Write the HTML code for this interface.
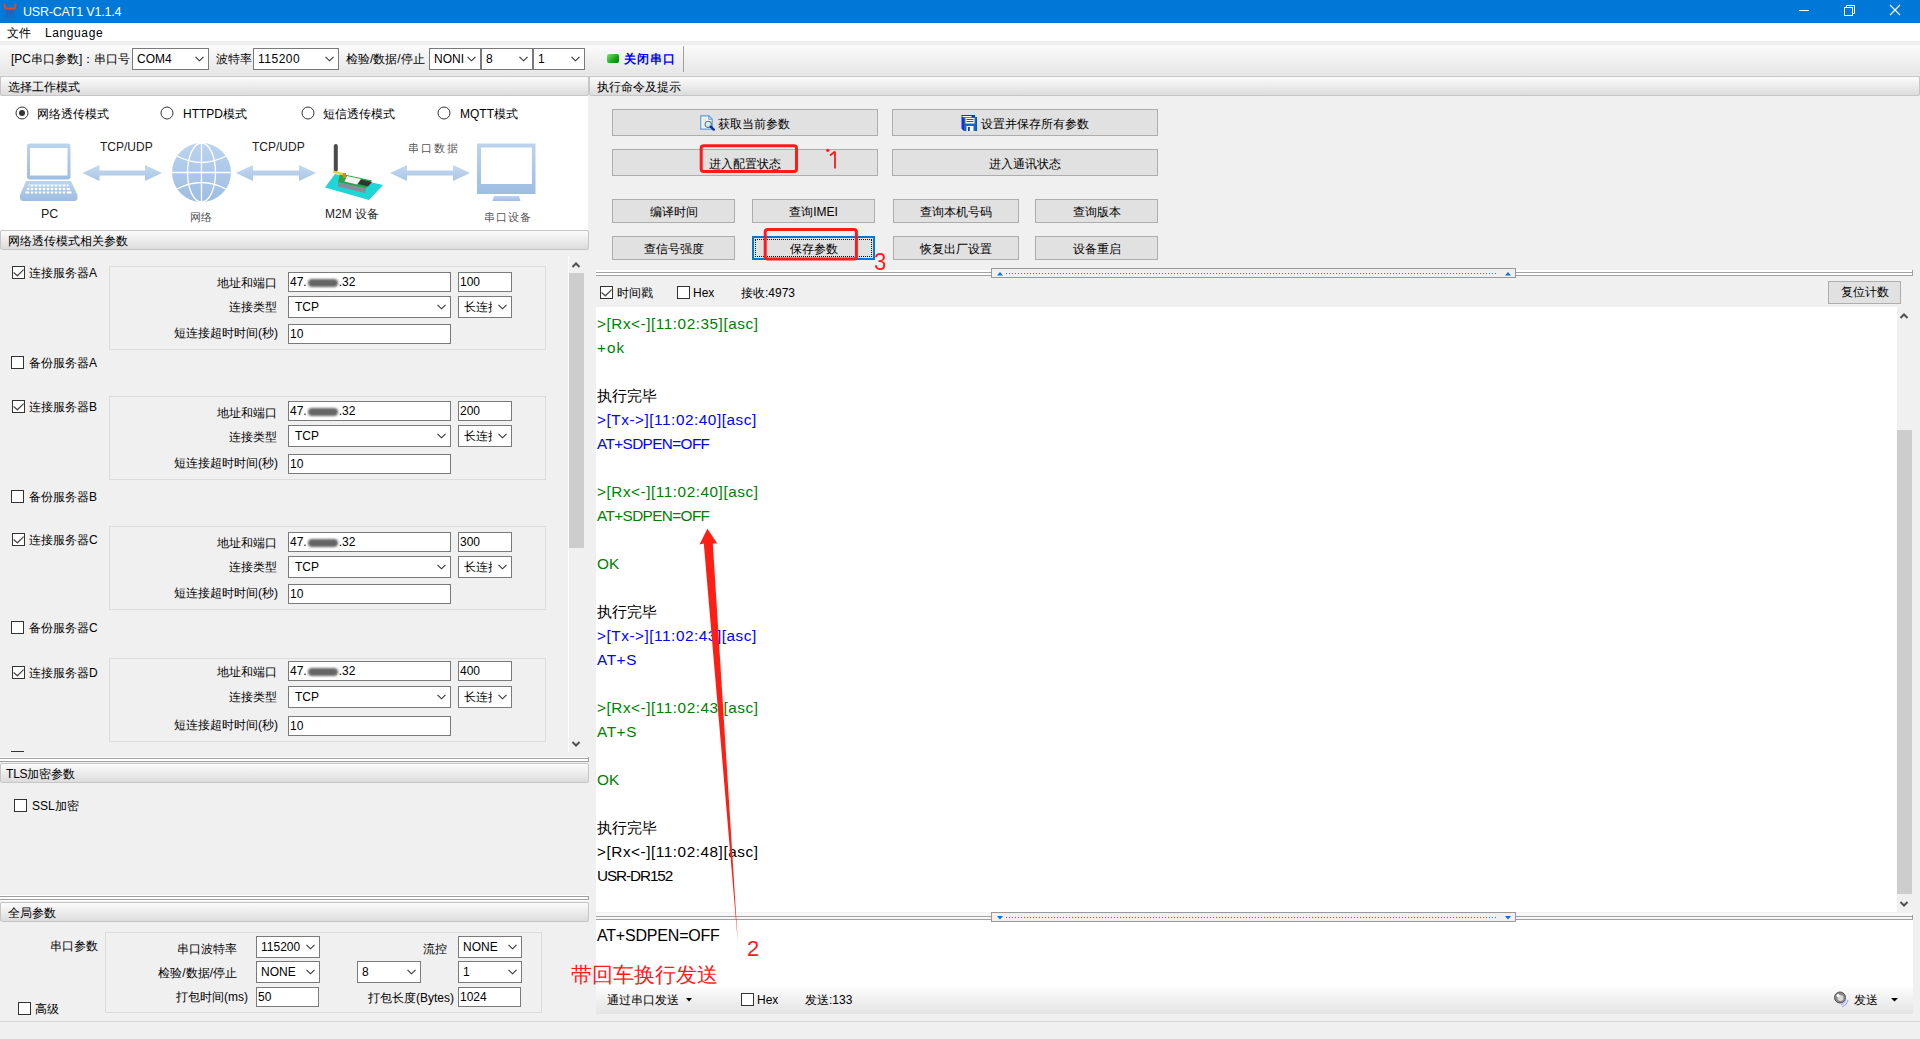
<!DOCTYPE html>
<html><head><meta charset="utf-8">
<style>
*{box-sizing:border-box;margin:0;padding:0}
html,body{width:1920px;height:1039px;overflow:hidden;background:#F0F0F0;font-family:"Liberation Sans",sans-serif;font-size:12px;color:#000}
.a{position:absolute}
.t{position:absolute;white-space:nowrap;line-height:16px;height:16px}
.hdr{position:absolute;height:20px;border:1px solid #C6C6C6;border-radius:2px;background:linear-gradient(#FBFBFB,#E9E9E9 60%,#DCDCDC)}
.hdr span{position:absolute;left:7px;top:2px;line-height:16px;white-space:nowrap}
.inp{position:absolute;background:#fff;border:1px solid #7A7A7A;height:20px;line-height:18px;padding-left:1px;white-space:nowrap;overflow:hidden}
.cmb{position:absolute;background:#fff;border:1px solid #7A7A7A;height:22px;line-height:20px;padding-left:4px;white-space:nowrap;overflow:hidden}
.cmb svg{position:absolute;right:4px;top:7px}
.cb{position:absolute;width:13px;height:13px;border:1px solid #333;background:#fff}
.btn{position:absolute;background:#E1E1E1;border:1px solid #ADADAD;text-align:center;white-space:nowrap}
.grp{position:absolute;border:1px solid #DCDCDC}
.log{position:absolute;left:597px;white-space:nowrap;font-size:15.3px;line-height:24px;height:24px}
</style></head><body>

<!-- title bar -->
<div class="a" style="left:0;top:0;width:1920px;height:23px;background:#0078D7"></div>
<svg class="a" style="left:3px;top:3px" width="14" height="16" viewBox="0 0 14 16">
<path d="M1.6 1.6 Q1.8 4.8 2.6 5.6 L11.4 5.6 Q12.2 4.8 12.4 1.6" fill="none" stroke="#D84A2E" stroke-width="2.2" stroke-linecap="round"/>
<path d="M2.5 6.8 L11.5 6.8 L11 11 L3 11 Z" fill="#2D5DB0" opacity="0.75"/>
<path d="M3.8 10 L4.2 14.2 M7 10 L7 14.2 M10.2 10 L9.8 14.2" stroke="#2D5DB0" stroke-width="1.8" opacity="0.75"/>
</svg>
<div class="t" style="left:23px;top:4px;color:#fff;font-size:12.5px;letter-spacing:-0.2px">USR-CAT1 V1.1.4</div>
<svg class="a" style="left:1795px;top:0" width="120" height="22">
<line x1="4" y1="10.5" x2="14" y2="10.5" stroke="#fff" stroke-width="1"/>
<rect x="49.5" y="7.5" width="8" height="8" fill="none" stroke="#fff"/>
<path d="M51.5 7.5 V5.5 H59.5 V13.5 H57.5" fill="none" stroke="#fff"/>
<path d="M95 5 L105 15 M105 5 L95 15" stroke="#fff" stroke-width="1.1"/>
</svg>

<!-- menu -->
<div class="a" style="left:0;top:23px;width:1920px;height:18px;background:#fff"></div>
<div class="t" style="left:7px;top:25px">文件</div>
<div class="t" style="left:45px;top:25px;letter-spacing:0.6px">Language</div>

<!-- toolbar -->
<div class="a" style="left:0;top:41px;width:1920px;height:4px;background:#EFEFEF"></div>
<div class="a" style="left:0;top:45px;width:1920px;height:31px;background:linear-gradient(#FBFBFB,#E6E6E6 94%,#EBEBEB)"></div>
<div class="a" style="left:0;top:76px;width:1920px;height:1px;background:#CACACA"></div>


<div class="t" style="left:11px;top:51px">[PC串口参数]：串口号</div>
<div class="cmb" style="left:132px;top:48px;width:77px;padding-left:4px">COM4<svg width="9" height="6" viewBox="0 0 9 6"><path d="M0.5 0.8 L4.5 4.8 L8.5 0.8" fill="none" stroke="#333" stroke-width="1.1"/></svg></div>
<div class="t" style="left:216px;top:51px">波特率</div>
<div class="cmb" style="left:253px;top:48px;width:86px;letter-spacing:0.5px">115200<svg width="9" height="6" viewBox="0 0 9 6"><path d="M0.5 0.8 L4.5 4.8 L8.5 0.8" fill="none" stroke="#333" stroke-width="1.1"/></svg></div>
<div class="t" style="left:346px;top:51px">检验/数据/停止</div>
<div class="cmb" style="left:429px;top:48px;width:52px">NONI<svg width="9" height="6" viewBox="0 0 9 6"><path d="M0.5 0.8 L4.5 4.8 L8.5 0.8" fill="none" stroke="#333" stroke-width="1.1"/></svg></div>
<div class="cmb" style="left:481px;top:48px;width:52px">8<svg width="9" height="6" viewBox="0 0 9 6"><path d="M0.5 0.8 L4.5 4.8 L8.5 0.8" fill="none" stroke="#333" stroke-width="1.1"/></svg></div>
<div class="cmb" style="left:533px;top:48px;width:52px">1<svg width="9" height="6" viewBox="0 0 9 6"><path d="M0.5 0.8 L4.5 4.8 L8.5 0.8" fill="none" stroke="#333" stroke-width="1.1"/></svg></div>
<div class="a" style="left:607px;top:54px;width:12px;height:9px;border-radius:2px;background:linear-gradient(135deg,#7CE37C,#14A814 60%,#0A7A0A)"></div>
<div class="t" style="left:624px;top:51px;color:#0000FF;font-weight:bold;letter-spacing:1px">关闭串口</div>
<div class="a" style="left:683px;top:46px;width:1px;height:26px;background:#A0A0A0"></div>


<!-- left panel -->
<div class="hdr" style="left:0;top:76px;width:589px"><span>选择工作模式</span></div>
<div class="a" style="left:0;top:96px;width:588px;height:134px;background:#fff"></div>

<svg class="a" style="left:15px;top:106px" width="14" height="14"><circle cx="7" cy="7" r="6" fill="#fff" stroke="#333" stroke-width="1"/><circle cx="7" cy="7" r="3" fill="#333"/></svg><div class="t" style="left:37px;top:106px">网络透传模式</div>
<svg class="a" style="left:160px;top:106px" width="14" height="14"><circle cx="7" cy="7" r="6" fill="#fff" stroke="#333" stroke-width="1"/></svg><div class="t" style="left:183px;top:106px">HTTPD模式</div>
<svg class="a" style="left:301px;top:106px" width="14" height="14"><circle cx="7" cy="7" r="6" fill="#fff" stroke="#333" stroke-width="1"/></svg><div class="t" style="left:323px;top:106px">短信透传模式</div>
<svg class="a" style="left:437px;top:106px" width="14" height="14"><circle cx="7" cy="7" r="6" fill="#fff" stroke="#333" stroke-width="1"/></svg><div class="t" style="left:460px;top:106px">MQTT模式</div>
<svg class="a" style="left:0;top:96px" width="588" height="134" viewBox="0 96 588 134">
<defs>
<linearGradient id="ag" x1="0" y1="0" x2="0" y2="1"><stop offset="0" stop-color="#C4D9F0"/><stop offset="1" stop-color="#A9C6E6"/></linearGradient>
<linearGradient id="bg" x1="0" y1="0" x2="0" y2="1"><stop offset="0" stop-color="#BCD4EE"/><stop offset="1" stop-color="#9DBDE2"/></linearGradient>
</defs>
<!-- laptop -->
<rect x="27" y="143.5" width="43.5" height="36" rx="3" fill="url(#bg)"/>
<rect x="30" y="148" width="37.5" height="27.5" fill="#fff"/>
<path d="M26 181 L71 181 L77.5 195 L77.5 199 L75.5 201 L22 201 L20 199 L20 195 Z" fill="url(#bg)"/>
<g fill="#fff">
<rect x="28.5" y="184.5" width="40" height="2"/><rect x="27" y="188" width="43" height="2"/><rect x="25.5" y="191.5" width="46" height="2"/>
</g>
<path d="M30 184.5 V194 M34 184.5 V194 M38 184.5 V194 M42 184.5 V194 M46 184.5 V194 M50 184.5 V194 M54 184.5 V194 M58 184.5 V194 M62 184.5 V194 M66 184.5 V194" stroke="url(#bg)" stroke-width="1.5"/>
<path d="M82.5 173 L99.5 165 L99.5 170.5 L145 170.5 L145 165 L162 173 L145 181 L145 175.5 L99.5 175.5 L99.5 181 Z" fill="url(#ag)"/>
<path d="M236 173 L253 165 L253 170.5 L299 170.5 L299 165 L316 173 L299 181 L299 175.5 L253 175.5 L253 181 Z" fill="url(#ag)"/>
<path d="M390 173 L407 165 L407 170.5 L453 170.5 L453 165 L470 173 L453 181 L453 175.5 L407 175.5 L407 181 Z" fill="url(#ag)"/>
<!-- globe -->
<circle cx="201.5" cy="172.5" r="29.5" fill="url(#bg)"/>
<g fill="none" stroke="#fff" stroke-width="1.3">
<line x1="201.5" y1="143" x2="201.5" y2="202"/>
<line x1="172" y1="172.5" x2="231" y2="172.5"/>
<ellipse cx="201.5" cy="172.5" rx="14" ry="29.5"/>
<path d="M177 156 Q201.5 169 226 156"/>
<path d="M177 189 Q201.5 176 226 189"/>
</g>
<!-- M2M device -->
<rect x="333.8" y="144" width="4" height="28" rx="2" fill="#4A4A4A"/>
<path d="M335 174 L383 185 L369 200 L325 187.5 Z" fill="#1ED6D6"/>
<path d="M338 182 L366 188.5 L365 193 L338 186.5 Z" fill="#8A8A9A"/>
<path d="M340 173.5 L372 180.5 L366 188.5 L338 182 Z" fill="#2FA24A"/>
<path d="M347 176 L361 179 L357 184.5 L344.5 181.5 Z" fill="#F2F2F2"/>
<path d="M361 179.5 L372 182 L368 186.5 L358 184 Z" fill="#333"/>
<path d="M333 170.5 L346 173.5 L346 176 L333 173 Z" fill="#E8D040"/>
<rect x="343" y="173" width="3" height="5" fill="#C88A2A"/>
<!-- monitor -->
<rect x="477" y="143.5" width="58.5" height="50.5" fill="url(#bg)"/>
<rect x="481" y="147.5" width="51" height="36.5" fill="#fff"/>
<path d="M494 196 L519 196 L520.5 201 L492.5 201 Z" fill="url(#bg)"/>
</svg>
<div class="t" style="left:100px;top:139px;font-size:12px;color:#222;letter-spacing:0px">TCP/UDP</div>
<div class="t" style="left:252px;top:139px;font-size:12px;color:#222">TCP/UDP</div>
<div class="t" style="left:408px;top:140px;font-size:11px;color:#555;letter-spacing:2px">串口数据</div>
<div class="t" style="left:41px;top:206px;font-size:12.5px;color:#222">PC</div>
<div class="t" style="left:190px;top:209px;font-size:11px;color:#555">网络</div>
<div class="t" style="left:325px;top:206px;font-size:12px;color:#222">M2M 设备</div>
<div class="t" style="left:484px;top:209px;font-size:11px;color:#555;letter-spacing:1px">串口设备</div>


<div class="hdr" style="left:0;top:230px;width:589px"><span>网络透传模式相关参数</span></div>

<div class="cb" style="left:12px;top:266px"><svg class="a" style="left:0;top:0" width="11" height="11"><path d="M0.6 5.6 L4.4 8.8 L10.6 2.6" fill="none" stroke="#4A4A4A" stroke-width="1.25"/></svg></div><div class="t" style="left:29px;top:265px">连接服务器A</div>
<div class="grp" style="left:109px;top:266px;width:437px;height:84px"></div>
<div class="t" style="left:170px;width:107px;text-align:right;top:274.5px">地址和端口</div>
<div class="t" style="left:150px;width:127px;text-align:right;top:299px">连接类型</div>
<div class="t" style="left:150px;width:128px;text-align:right;top:325px">短连接超时时间(秒)</div>
<div class="inp" style="left:288px;top:272px;width:163px">47.<span style="display:inline-block;width:32px"></span>.32<div class="a" style="left:19px;top:6px;width:30px;height:8px;border-radius:4px;background:#555;filter:blur(1.2px);opacity:.9"></div></div>
<div class="inp" style="left:458px;top:272px;width:54px">100</div>
<div class="cmb" style="left:288px;top:296px;width:163px;padding-left:6px">TCP<svg width="9" height="6" viewBox="0 0 9 6"><path d="M0.5 0.8 L4.5 4.8 L8.5 0.8" fill="none" stroke="#333" stroke-width="1.1"/></svg></div>
<div class="cmb" style="left:458px;top:296px;width:54px;padding-left:5px"><span style="display:inline-block;width:28px;overflow:hidden;vertical-align:top">长连接</span><svg width="9" height="6" viewBox="0 0 9 6"><path d="M0.5 0.8 L4.5 4.8 L8.5 0.8" fill="none" stroke="#333" stroke-width="1.1"/></svg></div>
<div class="inp" style="left:288px;top:324px;width:163px">10</div>
<div class="cb" style="left:11px;top:356px"></div><div class="t" style="left:29px;top:355px">备份服务器A</div>

<div class="cb" style="left:12px;top:400px"><svg class="a" style="left:0;top:0" width="11" height="11"><path d="M0.6 5.6 L4.4 8.8 L10.6 2.6" fill="none" stroke="#4A4A4A" stroke-width="1.25"/></svg></div><div class="t" style="left:29px;top:399px">连接服务器B</div>
<div class="grp" style="left:109px;top:396px;width:437px;height:84px"></div>
<div class="t" style="left:170px;width:107px;text-align:right;top:404.5px">地址和端口</div>
<div class="t" style="left:150px;width:127px;text-align:right;top:429px">连接类型</div>
<div class="t" style="left:150px;width:128px;text-align:right;top:455px">短连接超时时间(秒)</div>
<div class="inp" style="left:288px;top:401px;width:163px">47.<span style="display:inline-block;width:32px"></span>.32<div class="a" style="left:19px;top:6px;width:30px;height:8px;border-radius:4px;background:#555;filter:blur(1.2px);opacity:.9"></div></div>
<div class="inp" style="left:458px;top:401px;width:54px">200</div>
<div class="cmb" style="left:288px;top:425px;width:163px;padding-left:6px">TCP<svg width="9" height="6" viewBox="0 0 9 6"><path d="M0.5 0.8 L4.5 4.8 L8.5 0.8" fill="none" stroke="#333" stroke-width="1.1"/></svg></div>
<div class="cmb" style="left:458px;top:425px;width:54px;padding-left:5px"><span style="display:inline-block;width:28px;overflow:hidden;vertical-align:top">长连接</span><svg width="9" height="6" viewBox="0 0 9 6"><path d="M0.5 0.8 L4.5 4.8 L8.5 0.8" fill="none" stroke="#333" stroke-width="1.1"/></svg></div>
<div class="inp" style="left:288px;top:454px;width:163px">10</div>
<div class="cb" style="left:11px;top:490px"></div><div class="t" style="left:29px;top:489px">备份服务器B</div>

<div class="cb" style="left:12px;top:533px"><svg class="a" style="left:0;top:0" width="11" height="11"><path d="M0.6 5.6 L4.4 8.8 L10.6 2.6" fill="none" stroke="#4A4A4A" stroke-width="1.25"/></svg></div><div class="t" style="left:29px;top:532px">连接服务器C</div>
<div class="grp" style="left:109px;top:526px;width:437px;height:84px"></div>
<div class="t" style="left:170px;width:107px;text-align:right;top:534.5px">地址和端口</div>
<div class="t" style="left:150px;width:127px;text-align:right;top:559px">连接类型</div>
<div class="t" style="left:150px;width:128px;text-align:right;top:585px">短连接超时时间(秒)</div>
<div class="inp" style="left:288px;top:532px;width:163px">47.<span style="display:inline-block;width:32px"></span>.32<div class="a" style="left:19px;top:6px;width:30px;height:8px;border-radius:4px;background:#555;filter:blur(1.2px);opacity:.9"></div></div>
<div class="inp" style="left:458px;top:532px;width:54px">300</div>
<div class="cmb" style="left:288px;top:556px;width:163px;padding-left:6px">TCP<svg width="9" height="6" viewBox="0 0 9 6"><path d="M0.5 0.8 L4.5 4.8 L8.5 0.8" fill="none" stroke="#333" stroke-width="1.1"/></svg></div>
<div class="cmb" style="left:458px;top:556px;width:54px;padding-left:5px"><span style="display:inline-block;width:28px;overflow:hidden;vertical-align:top">长连接</span><svg width="9" height="6" viewBox="0 0 9 6"><path d="M0.5 0.8 L4.5 4.8 L8.5 0.8" fill="none" stroke="#333" stroke-width="1.1"/></svg></div>
<div class="inp" style="left:288px;top:584px;width:163px">10</div>
<div class="cb" style="left:11px;top:621px"></div><div class="t" style="left:29px;top:620px">备份服务器C</div>

<div class="cb" style="left:12px;top:666px"><svg class="a" style="left:0;top:0" width="11" height="11"><path d="M0.6 5.6 L4.4 8.8 L10.6 2.6" fill="none" stroke="#4A4A4A" stroke-width="1.25"/></svg></div><div class="t" style="left:29px;top:665px">连接服务器D</div>
<div class="grp" style="left:109px;top:658px;width:437px;height:84px"></div>
<div class="t" style="left:170px;width:107px;text-align:right;top:664px">地址和端口</div>
<div class="t" style="left:150px;width:127px;text-align:right;top:689px">连接类型</div>
<div class="t" style="left:150px;width:128px;text-align:right;top:717px">短连接超时时间(秒)</div>
<div class="inp" style="left:288px;top:661px;width:163px">47.<span style="display:inline-block;width:32px"></span>.32<div class="a" style="left:19px;top:6px;width:30px;height:8px;border-radius:4px;background:#555;filter:blur(1.2px);opacity:.9"></div></div>
<div class="inp" style="left:458px;top:661px;width:54px">400</div>
<div class="cmb" style="left:288px;top:686px;width:163px;padding-left:6px">TCP<svg width="9" height="6" viewBox="0 0 9 6"><path d="M0.5 0.8 L4.5 4.8 L8.5 0.8" fill="none" stroke="#333" stroke-width="1.1"/></svg></div>
<div class="cmb" style="left:458px;top:686px;width:54px;padding-left:5px"><span style="display:inline-block;width:28px;overflow:hidden;vertical-align:top">长连接</span><svg width="9" height="6" viewBox="0 0 9 6"><path d="M0.5 0.8 L4.5 4.8 L8.5 0.8" fill="none" stroke="#333" stroke-width="1.1"/></svg></div>
<div class="inp" style="left:288px;top:716px;width:163px">10</div>

<div class="a" style="left:11px;top:751px;width:13px;height:1px;background:#333"></div>
<!-- left scrollbar -->
<div class="a" style="left:568px;top:256px;width:1px;height:496px;background:#fff"></div>
<div class="a" style="left:569px;top:273px;width:15px;height:275px;background:#CDCDCD"></div>
<svg class="a" style="left:571px;top:261px" width="10" height="8"><path d="M1.5 6 L5 2.5 L8.5 6" fill="none" stroke="#505050" stroke-width="2"/></svg>
<svg class="a" style="left:571px;top:740px" width="10" height="8"><path d="M1.5 2 L5 5.5 L8.5 2" fill="none" stroke="#505050" stroke-width="2"/></svg>
<!-- splitter -->
<div class="a" style="left:0;top:757px;width:589px;height:5px;background:#fff;border-top:1px solid #fff"></div>
<div class="a" style="left:0;top:758px;width:589px;height:1px;background:#A0A0A0"></div>
<div class="a" style="left:0;top:761px;width:589px;height:1px;background:#A0A0A0"></div>
<div class="a" style="left:588px;top:757px;width:1px;height:5px;background:#A0A0A0"></div>


<div class="hdr" style="left:0;top:763px;width:589px"><span style="left:5px;letter-spacing:-0.2px">TLS加密参数</span></div>

<div class="cb" style="left:14px;top:799px"></div><div class="t" style="left:32px;top:798px">SSL加密</div>
<!-- splitter 2 -->
<div class="a" style="left:0;top:895px;width:589px;height:6px;background:#fff"></div>
<div class="a" style="left:0;top:896px;width:589px;height:1px;background:#A0A0A0"></div>
<div class="a" style="left:0;top:899px;width:589px;height:1px;background:#A0A0A0"></div>
<div class="a" style="left:588px;top:896px;width:1px;height:4px;background:#A0A0A0"></div>


<div class="hdr" style="left:0;top:902px;width:589px"><span>全局参数</span></div>

<div class="t" style="left:40px;width:58px;text-align:right;top:938px">串口参数</div>
<div class="grp" style="left:105px;top:932px;width:437px;height:81px"></div>
<div class="t" style="left:150px;width:87px;text-align:right;top:941px">串口波特率</div>
<div class="t" style="left:130px;width:107px;text-align:right;top:965px">检验/数据/停止</div>
<div class="t" style="left:150px;width:98px;text-align:right;top:989px">打包时间(ms)</div>
<div class="cmb" style="left:256px;top:936px;width:64px;height:22px"><span style="display:inline-block;width:39px;overflow:hidden;vertical-align:top">115200</span><svg width="9" height="6" viewBox="0 0 9 6"><path d="M0.5 0.8 L4.5 4.8 L8.5 0.8" fill="none" stroke="#333" stroke-width="1.1"/></svg></div>
<div class="cmb" style="left:256px;top:961px;width:64px;height:22px">NONE<svg width="9" height="6" viewBox="0 0 9 6"><path d="M0.5 0.8 L4.5 4.8 L8.5 0.8" fill="none" stroke="#333" stroke-width="1.1"/></svg></div>
<div class="inp" style="left:256px;top:987px;width:63px">50</div>
<div class="cmb" style="left:357px;top:961px;width:64px;height:22px">8<svg width="9" height="6" viewBox="0 0 9 6"><path d="M0.5 0.8 L4.5 4.8 L8.5 0.8" fill="none" stroke="#333" stroke-width="1.1"/></svg></div>
<div class="t" style="left:400px;width:47px;text-align:right;top:941px">流控</div>
<div class="cmb" style="left:458px;top:936px;width:64px;height:22px">NONE<svg width="9" height="6" viewBox="0 0 9 6"><path d="M0.5 0.8 L4.5 4.8 L8.5 0.8" fill="none" stroke="#333" stroke-width="1.1"/></svg></div>
<div class="cmb" style="left:458px;top:961px;width:64px;height:22px">1<svg width="9" height="6" viewBox="0 0 9 6"><path d="M0.5 0.8 L4.5 4.8 L8.5 0.8" fill="none" stroke="#333" stroke-width="1.1"/></svg></div>
<div class="t" style="left:340px;width:114px;text-align:right;top:990px">打包长度(Bytes)</div>
<div class="inp" style="left:458px;top:987px;width:63px">1024</div>
<div class="cb" style="left:18px;top:1002px"></div><div class="t" style="left:35px;top:1001px">高级</div>


<!-- right panel -->
<div class="hdr" style="left:589px;top:76px;width:1331px"><span>执行命令及提示</span></div>

<div class="btn" style="left:612px;top:109px;width:266px;height:27px"></div><svg class="a" style="left:700px;top:115px" width="17" height="17" viewBox="0 0 17 17">
<path d="M0.8 0.8 H8.8 L12.2 4.2 V14.2 H0.8 Z" fill="#fff" stroke="#5B9BD5" stroke-width="1.2"/>
<path d="M8.8 0.8 V4.2 H12.2" fill="none" stroke="#5B9BD5" stroke-width="1.1"/>
<path d="M2.5 4 H6.5 M2.5 6 H6 M2.5 8 H4.5 M2.5 10 H4.5 M2.5 12 H5" stroke="#CFCFCF" stroke-width="0.9"/>
<circle cx="8.2" cy="9.3" r="3.1" fill="#C8F8FA" stroke="#6A6A6A" stroke-width="1.1"/>
<path d="M10.6 11.7 L13.8 14.6" stroke="#0A2DA8" stroke-width="2.4" stroke-linecap="round"/>
</svg>
<div class="t" style="left:718px;top:116px">获取当前参数</div>
<div class="btn" style="left:892px;top:109px;width:266px;height:27px"></div><svg class="a" style="left:961px;top:114px" width="17" height="18" viewBox="0 0 17 18">
<path d="M0.5 1 H14 V3 H16 V17 H3 L0.5 14.5 Z" fill="#0A3DB0"/>
<rect x="3" y="3" width="12.5" height="14" fill="#1166CC"/>
<rect x="4.5" y="4" width="9" height="5.5" fill="#fff"/>
<path d="M5.5 5.5 H12.5 M5.5 7.5 H12.5" stroke="#0A3DB0" stroke-width="0.9"/>
<rect x="5.5" y="12" width="7" height="5" fill="#fff"/>
<rect x="7" y="13" width="1.8" height="4" fill="#0A3DB0"/>
<rect x="1.5" y="2" width="9" height="1.2" fill="#fff"/>
</svg>
<div class="t" style="left:981px;top:116px">设置并保存所有参数</div>
<div class="btn" style="left:612px;top:149px;width:266px;height:27px"></div>
<div class="t" style="left:709px;top:156px">进入配置状态</div>
<div class="btn" style="left:892px;top:149px;width:266px;height:27px"></div>
<div class="t" style="left:989px;top:156px">进入通讯状态</div>
<div class="btn" style="left:612px;top:199px;width:123px;height:24px;line-height:24px">编译时间</div>
<div class="btn" style="left:752px;top:199px;width:123px;height:24px;line-height:24px">查询IMEI</div>
<div class="btn" style="left:893px;top:199px;width:126px;height:24px;line-height:24px">查询本机号码</div>
<div class="btn" style="left:1035px;top:199px;width:123px;height:24px;line-height:24px">查询版本</div>
<div class="btn" style="left:612px;top:236px;width:123px;height:24px;line-height:24px">查信号强度</div>
<div class="btn" style="left:752px;top:236px;width:123px;height:24px;line-height:22px;border:2px solid #0078D7"><div class="a" style="left:1px;top:1px;right:1px;bottom:1px;border:1px dotted #111"></div>保存参数</div>
<div class="btn" style="left:893px;top:236px;width:126px;height:24px;line-height:24px">恢复出厂设置</div>
<div class="btn" style="left:1035px;top:236px;width:123px;height:24px;line-height:24px">设备重启</div>

<!-- splitter top -->
<div class="a" style="left:596px;top:270px;width:1317px;height:6px;background:#fff"></div>
<div class="a" style="left:596px;top:272px;width:1317px;height:1px;background:#A0A0A0"></div>
<div class="a" style="left:596px;top:275px;width:1317px;height:1px;background:#A0A0A0"></div>
<div class="a" style="left:1912px;top:270px;width:1px;height:6px;background:#A0A0A0"></div>
<div class="a" style="left:991px;top:268px;width:525px;height:10px;background:#F0F0F0;border:1px solid #999"></div>
<svg class="a" style="left:997px;top:272px" width="6" height="4"><path d="M0 3.5 L3 0 L6 3.5 Z" fill="#0A6FD8"/></svg>
<svg class="a" style="left:1505px;top:272px" width="6" height="4"><path d="M0 3.5 L3 0 L6 3.5 Z" fill="#0A6FD8"/></svg>
<div class="a" style="left:1006px;top:273px;width:492px;height:1px;background:repeating-linear-gradient(90deg,#1A7BE0 0 1px,transparent 1px 3px)"></div>


<div class="t" style="left:617px;top:285px">时间戳</div>
<div class="cb" style="left:600px;top:286px"><svg class="a" style="left:0;top:0" width="11" height="11"><path d="M0.6 5.6 L4.4 8.8 L10.6 2.6" fill="none" stroke="#4A4A4A" stroke-width="1.25"/></svg></div>
<div class="cb" style="left:677px;top:286px"></div><div class="t" style="left:693px;top:285px">Hex</div>
<div class="t" style="left:741px;top:285px">接收:4973</div>
<div class="btn" style="left:1828px;top:281px;width:73px;height:23px;line-height:21px">复位计数</div>
<div class="a" style="left:596px;top:307px;width:1301px;height:605px;background:#fff"></div>
<div class="a" style="left:1897px;top:430px;width:15px;height:464px;background:#CDCDCD"></div>
<svg class="a" style="left:1899px;top:312px" width="10" height="8"><path d="M1.5 6 L5 2.5 L8.5 6" fill="none" stroke="#505050" stroke-width="2"/></svg>
<svg class="a" style="left:1899px;top:900px" width="10" height="8"><path d="M1.5 2 L5 5.5 L8.5 2" fill="none" stroke="#505050" stroke-width="2"/></svg>
<div class="log" style="top:312px;color:#008000;letter-spacing:0.55px">&gt;[Rx&lt;-][11:02:35][asc]</div>
<div class="log" style="top:336px;color:#008000;letter-spacing:1px">+ok</div>
<div class="log" style="top:384px;color:#000">执行完毕</div>
<div class="log" style="top:408px;color:#0000FF;letter-spacing:0.55px">&gt;[Tx-&gt;][11:02:40][asc]</div>
<div class="log" style="top:432px;color:#0000FF;letter-spacing:-0.6px">AT+SDPEN=OFF</div>
<div class="log" style="top:480px;color:#008000;letter-spacing:0.55px">&gt;[Rx&lt;-][11:02:40][asc]</div>
<div class="log" style="top:504px;color:#008000;letter-spacing:-0.6px">AT+SDPEN=OFF</div>
<div class="log" style="top:552px;color:#008000">OK</div>
<div class="log" style="top:600px;color:#000">执行完毕</div>
<div class="log" style="top:624px;color:#0000FF;letter-spacing:0.55px">&gt;[Tx-&gt;][11:02:43][asc]</div>
<div class="log" style="top:648px;color:#0000FF;letter-spacing:0.6px">AT+S</div>
<div class="log" style="top:696px;color:#008000;letter-spacing:0.55px">&gt;[Rx&lt;-][11:02:43][asc]</div>
<div class="log" style="top:720px;color:#008000;letter-spacing:0.6px">AT+S</div>
<div class="log" style="top:768px;color:#008000">OK</div>
<div class="log" style="top:816px;color:#000">执行完毕</div>
<div class="log" style="top:840px;color:#000;letter-spacing:0.55px">&gt;[Rx&lt;-][11:02:48][asc]</div>
<div class="log" style="top:864px;color:#000;letter-spacing:-1.1px">USR-DR152</div>


<!-- splitter bottom -->
<div class="a" style="left:596px;top:920px;width:1317px;height:66px;background:#fff"></div>

<div class="a" style="left:596px;top:913px;width:1317px;height:7px;background:#F7F7F7"></div>
<div class="a" style="left:596px;top:916px;width:1317px;height:1px;background:#A0A0A0"></div>
<div class="a" style="left:596px;top:919px;width:1317px;height:1px;background:#A0A0A0"></div>
<div class="a" style="left:1912px;top:915px;width:1px;height:5px;background:#A0A0A0"></div>
<div class="a" style="left:991px;top:912px;width:525px;height:10px;background:#F0F0F0;border:1px solid #999"></div>
<svg class="a" style="left:997px;top:916px" width="6" height="4"><path d="M0 0 L3 3.5 L6 0 Z" fill="#0A6FD8"/></svg>
<svg class="a" style="left:1505px;top:916px" width="6" height="4"><path d="M0 0 L3 3.5 L6 0 Z" fill="#0A6FD8"/></svg>
<div class="a" style="left:1006px;top:917px;width:492px;height:1px;background:repeating-linear-gradient(90deg,#1A7BE0 0 1px,transparent 1px 3px)"></div>
<div class="log" style="top:924px;color:#000;font-size:16px;letter-spacing:-0.2px">AT+SDPEN=OFF</div>
<div class="a" style="left:596px;top:986px;width:1317px;height:28px;background:linear-gradient(#FDFDFD,#F0F0F0 50%,#E4E4E4)"></div>
<div class="t" style="left:607px;top:992px">通过串口发送</div>
<svg class="a" style="left:686px;top:998px" width="6" height="4"><path d="M0 0 H6 L3 3.5 Z" fill="#000"/></svg>
<div class="cb" style="left:741px;top:993px"></div><div class="t" style="left:757px;top:992px">Hex</div>
<div class="t" style="left:805px;top:992px">发送:133</div>
<svg class="a" style="left:1833px;top:991px" width="18" height="17" viewBox="0 0 18 17">
<circle cx="7" cy="6.5" r="5.5" fill="#888" stroke="#555" stroke-width="1"/>
<circle cx="7.5" cy="7" r="3" fill="#D8D8D8"/>
<circle cx="5" cy="4.5" r="1.5" fill="#fff"/>
<path d="M13 8 Q12 12 8 14 M15 9 Q14 14 9 16" fill="none" stroke="#8888FF" stroke-width="0.9"/>
</svg>
<div class="t" style="left:1854px;top:992px">发送</div>
<svg class="a" style="left:1891px;top:998px" width="7" height="4"><path d="M0 0 H7 L3.5 3.5 Z" fill="#000"/></svg>


<!-- status bar -->
<div class="a" style="left:0;top:1021px;width:1920px;height:1px;background:#D7D7D7"></div>


<svg class="a" style="left:0;top:0" width="1920" height="1039" viewBox="0 0 1920 1039">
<rect x="701.2" y="145.7" width="95.3" height="25.8" rx="2.5" fill="none" stroke="#FF1A1A" stroke-width="3"/>
<rect x="765.2" y="229.5" width="91.2" height="29.6" rx="2.5" fill="none" stroke="#FF1A1A" stroke-width="3"/>
<path d="M707.4 528.8 L699.5 544.5 L703.8 543.5 L737.8 942 L712.8 543.5 L717.2 543.5 Z" fill="#FF1E14"/>
<circle cx="827.8" cy="150.3" r="1.6" fill="#FF1A1A"/>
</svg>
<svg class="a" style="left:826px;top:148px" width="14" height="22"><path d="M9 3.5 V20.5 M9 3.5 L4 7.5" fill="none" stroke="#FF1A1A" stroke-width="1.8"/></svg>
<div class="t" style="left:874px;top:249px;color:#FF1A1A;font-size:22px;line-height:24px;height:24px;transform:scaleY(1.1);transform-origin:top">3</div>
<div class="t" style="left:747px;top:937px;color:#FF1A1A;font-size:22px;line-height:24px;height:24px">2</div>
<div class="t" style="left:571px;top:962px;color:#FF1A1A;font-size:21px;line-height:26px;height:26px">带回车换行发送</div>

</body></html>
